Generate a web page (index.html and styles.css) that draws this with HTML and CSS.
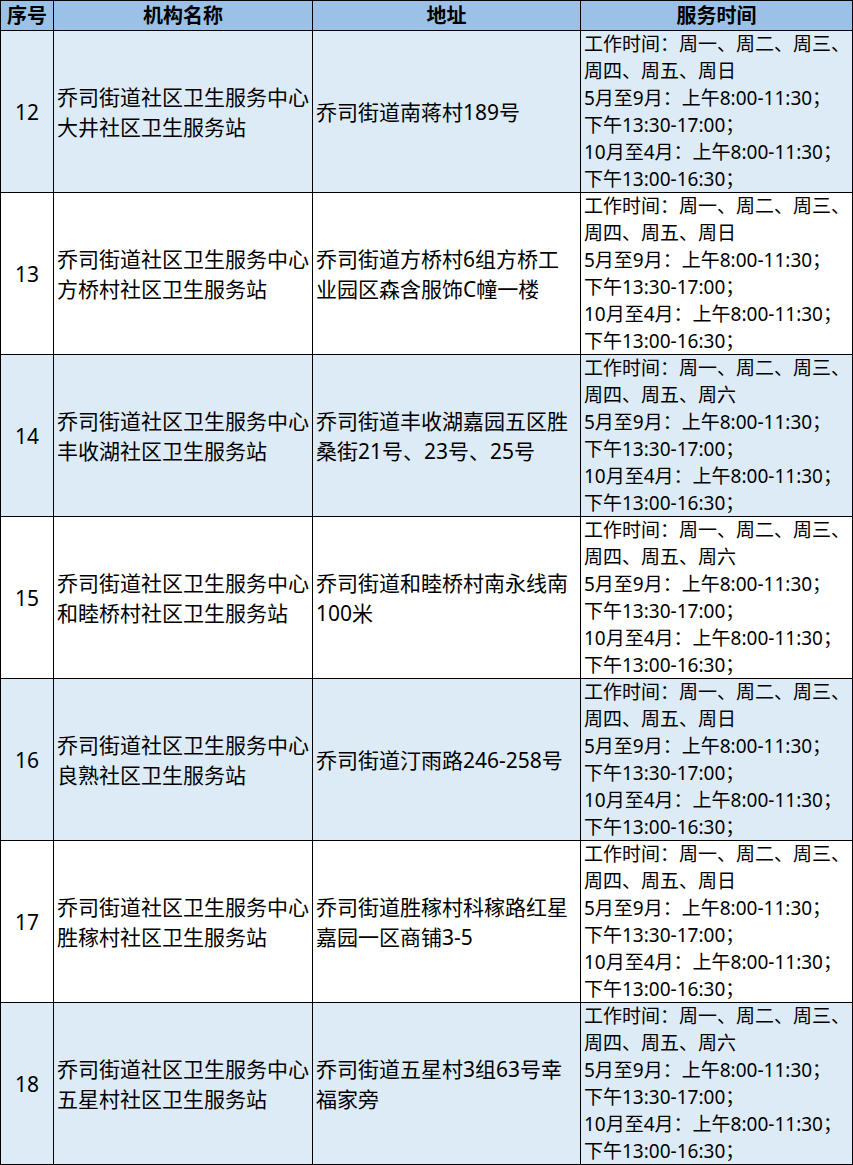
FILE: index.html
```html
<!DOCTYPE html>
<html lang="zh-CN">
<head>
<meta charset="utf-8">
<title>乔司街道社区卫生服务站</title>
<link rel="stylesheet" href="styles.css">
</head>
<body>
<div class="sheet">
  <div class="th">序号</div>
  <div class="th">机构名称</div>
  <div class="th">地址</div>
  <div class="th">服务时间</div>

  <div class="td num alt">12</div>
  <div class="td mid alt"><span>乔司街道社区卫生服务中心<br>大井社区卫生服务站</span></div>
  <div class="td mid alt"><span>乔司街道南蒋村189号</span></div>
  <div class="td time alt">
    <div>工作时间：周一、周二、周三、</div><div>周四、周五、周日</div>
    <div>5月至9月：上午8:00-11:30；</div><div>下午13:30-17:00；</div>
    <div>10月至4月：上午8:00-11:30；</div><div>下午13:00-16:30；</div>
  </div>

  <div class="td num">13</div>
  <div class="td mid"><span>乔司街道社区卫生服务中心<br>方桥村社区卫生服务站</span></div>
  <div class="td mid"><span>乔司街道方桥村6组方桥工<br>业园区森含服饰C幢一楼</span></div>
  <div class="td time">
    <div>工作时间：周一、周二、周三、</div><div>周四、周五、周日</div>
    <div>5月至9月：上午8:00-11:30；</div><div>下午13:30-17:00；</div>
    <div>10月至4月：上午8:00-11:30；</div><div>下午13:00-16:30；</div>
  </div>

  <div class="td num alt">14</div>
  <div class="td mid alt"><span>乔司街道社区卫生服务中心<br>丰收湖社区卫生服务站</span></div>
  <div class="td mid alt"><span>乔司街道丰收湖嘉园五区胜<br>桑街21号、23号、25号</span></div>
  <div class="td time alt">
    <div>工作时间：周一、周二、周三、</div><div>周四、周五、周六</div>
    <div>5月至9月：上午8:00-11:30；</div><div>下午13:30-17:00；</div>
    <div>10月至4月：上午8:00-11:30；</div><div>下午13:00-16:30；</div>
  </div>

  <div class="td num">15</div>
  <div class="td mid"><span>乔司街道社区卫生服务中心<br>和睦桥村社区卫生服务站</span></div>
  <div class="td mid"><span>乔司街道和睦桥村南永线南<br>100米</span></div>
  <div class="td time">
    <div>工作时间：周一、周二、周三、</div><div>周四、周五、周六</div>
    <div>5月至9月：上午8:00-11:30；</div><div>下午13:30-17:00；</div>
    <div>10月至4月：上午8:00-11:30；</div><div>下午13:00-16:30；</div>
  </div>

  <div class="td num alt">16</div>
  <div class="td mid alt"><span>乔司街道社区卫生服务中心<br>良熟社区卫生服务站</span></div>
  <div class="td mid alt"><span>乔司街道汀雨路246-258号</span></div>
  <div class="td time alt">
    <div>工作时间：周一、周二、周三、</div><div>周四、周五、周日</div>
    <div>5月至9月：上午8:00-11:30；</div><div>下午13:30-17:00；</div>
    <div>10月至4月：上午8:00-11:30；</div><div>下午13:00-16:30；</div>
  </div>

  <div class="td num">17</div>
  <div class="td mid"><span>乔司街道社区卫生服务中心<br>胜稼村社区卫生服务站</span></div>
  <div class="td mid"><span>乔司街道胜稼村科稼路红星<br>嘉园一区商铺3-5</span></div>
  <div class="td time">
    <div>工作时间：周一、周二、周三、</div><div>周四、周五、周日</div>
    <div>5月至9月：上午8:00-11:30；</div><div>下午13:30-17:00；</div>
    <div>10月至4月：上午8:00-11:30；</div><div>下午13:00-16:30；</div>
  </div>

  <div class="td num alt">18</div>
  <div class="td mid alt"><span>乔司街道社区卫生服务中心<br>五星村社区卫生服务站</span></div>
  <div class="td mid alt"><span>乔司街道五星村3组63号幸<br>福家旁</span></div>
  <div class="td time alt">
    <div>工作时间：周一、周二、周三、</div><div>周四、周五、周六</div>
    <div>5月至9月：上午8:00-11:30；</div><div>下午13:30-17:00；</div>
    <div>10月至4月：上午8:00-11:30；</div><div>下午13:00-16:30；</div>
  </div>
</div>
</body>
</html>
```

FILE: styles.css
```css
html, body {
  margin: 0;
  padding: 0;
  background: #ffffff;
}

body {
  font-family: "Noto Sans", "Noto Sans CJK SC", "Microsoft YaHei", sans-serif;
  color: #000000;
}

.sheet {
  width: 853px;
  box-sizing: border-box;
  display: grid;
  grid-template-columns: 52px 258px 267px 271px;
  grid-template-rows: 29px repeat(7, 161px);
  gap: 1px;
  padding: 1px;
  background: #000000;
}

.th {
  background: #9bc2e6;
  font-size: 20px;
  font-weight: bold;
  line-height: 29px;
  text-align: center;
  white-space: nowrap;
  overflow: hidden;
}

.td {
  background: #ffffff;
  overflow: hidden;
  white-space: nowrap;
}

.td.alt {
  background: #ddebf7;
}

.num {
  display: flex;
  align-items: center;
  justify-content: center;
  font-size: 21px;
}

.mid {
  display: flex;
  align-items: center;
  padding-left: 3px;
  font-size: 21px;
  line-height: 30px;
}

.time {
  padding-left: 3px;
  font-size: 19px;
  line-height: 27px;
}
```
